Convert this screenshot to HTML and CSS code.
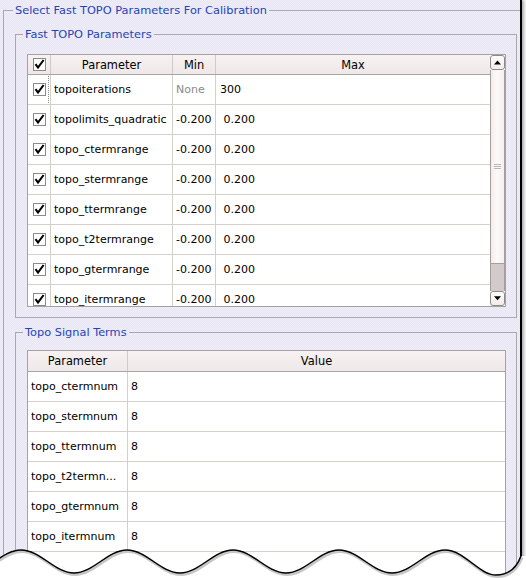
FILE: index.html
```html
<!DOCTYPE html>
<html>
<head>
<meta charset="utf-8">
<link rel="stylesheet" href="styles.css">
</head>
<body>
<div class="screen">
  <div class="window">
    <div class="group g1">
      <div class="ghead lead10"><span class="gtitle">Select Fast TOPO Parameters For Calibration</span></div>
      <div class="gbody b1">
        <div class="group g2">
          <div class="ghead lead8"><span class="gtitle">Fast TOPO Parameters</span></div>
          <div class="gbody b2">
            <div class="tbl t1">
              <div class="grid">
                <div class="row head">
                  <div class="c w-chk"><svg class="cb" width="13" height="13" viewBox="0 0 13 13"><rect x=".5" y=".5" width="12" height="12"/><path d="M2.5 6.2L5 9.6L10.6 2"/></svg></div>
                  <div class="c w-par">Parameter</div>
                  <div class="c w-min">Min</div>
                  <div class="c w-max">Max</div>
                </div>
                <div class="row">
                  <div class="c w-chk focus"><svg class="cb" width="13" height="13" viewBox="0 0 13 13"><rect x=".5" y=".5" width="12" height="12"/><path d="M2.5 6.2L5 9.6L10.6 2"/></svg></div>
                  <div class="c w-par">topoiterations</div>
                  <div class="c w-min muted">None</div>
                  <div class="c w-max">300</div>
                </div>
                <div class="row">
                  <div class="c w-chk"><svg class="cb" width="13" height="13" viewBox="0 0 13 13"><rect x=".5" y=".5" width="12" height="12"/><path d="M2.5 6.2L5 9.6L10.6 2"/></svg></div>
                  <div class="c w-par">topolimits_quadratic</div>
                  <div class="c w-min">-0.200</div>
                  <div class="c w-max"> 0.200</div>
                </div>
                <div class="row">
                  <div class="c w-chk"><svg class="cb" width="13" height="13" viewBox="0 0 13 13"><rect x=".5" y=".5" width="12" height="12"/><path d="M2.5 6.2L5 9.6L10.6 2"/></svg></div>
                  <div class="c w-par">topo_ctermrange</div>
                  <div class="c w-min">-0.200</div>
                  <div class="c w-max"> 0.200</div>
                </div>
                <div class="row">
                  <div class="c w-chk"><svg class="cb" width="13" height="13" viewBox="0 0 13 13"><rect x=".5" y=".5" width="12" height="12"/><path d="M2.5 6.2L5 9.6L10.6 2"/></svg></div>
                  <div class="c w-par">topo_stermrange</div>
                  <div class="c w-min">-0.200</div>
                  <div class="c w-max"> 0.200</div>
                </div>
                <div class="row">
                  <div class="c w-chk"><svg class="cb" width="13" height="13" viewBox="0 0 13 13"><rect x=".5" y=".5" width="12" height="12"/><path d="M2.5 6.2L5 9.6L10.6 2"/></svg></div>
                  <div class="c w-par">topo_ttermrange</div>
                  <div class="c w-min">-0.200</div>
                  <div class="c w-max"> 0.200</div>
                </div>
                <div class="row">
                  <div class="c w-chk"><svg class="cb" width="13" height="13" viewBox="0 0 13 13"><rect x=".5" y=".5" width="12" height="12"/><path d="M2.5 6.2L5 9.6L10.6 2"/></svg></div>
                  <div class="c w-par">topo_t2termrange</div>
                  <div class="c w-min">-0.200</div>
                  <div class="c w-max"> 0.200</div>
                </div>
                <div class="row">
                  <div class="c w-chk"><svg class="cb" width="13" height="13" viewBox="0 0 13 13"><rect x=".5" y=".5" width="12" height="12"/><path d="M2.5 6.2L5 9.6L10.6 2"/></svg></div>
                  <div class="c w-par">topo_gtermrange</div>
                  <div class="c w-min">-0.200</div>
                  <div class="c w-max"> 0.200</div>
                </div>
                <div class="row">
                  <div class="c w-chk"><svg class="cb" width="13" height="13" viewBox="0 0 13 13"><rect x=".5" y=".5" width="12" height="12"/><path d="M2.5 6.2L5 9.6L10.6 2"/></svg></div>
                  <div class="c w-par">topo_itermrange</div>
                  <div class="c w-min">-0.200</div>
                  <div class="c w-max"> 0.200</div>
                </div>
              </div>
              <div class="scrollbar">
                <div class="sb-btn"><svg width="13" height="13" viewBox="0 0 13 13"><path d="M3 8.5h7L6.5 4.6z"/></svg></div>
                <div class="sb-mid">
                  <div class="sb-thumb"><svg width="8" height="6" viewBox="0 0 8 6"><path d="M0 .5h7M0 2.5h7M0 4.5h7"/></svg></div>
                  <div class="sb-trough"></div>
                </div>
                <div class="sb-btn"><svg width="13" height="13" viewBox="0 0 13 13"><path d="M3 4.3h7L6.5 8.2z"/></svg></div>
              </div>
            </div>
          </div>
        </div>
        <div class="group g3">
          <div class="ghead lead8"><span class="gtitle">Topo Signal Terms</span></div>
          <div class="gbody b3">
            <div class="tbl t2">
              <div class="row head h2">
                <div class="c w-p2">Parameter</div>
                <div class="c w-val">Value</div>
              </div>
              <div class="row"><div class="c w-p2">topo_ctermnum</div><div class="c w-val">8</div></div>
              <div class="row"><div class="c w-p2">topo_stermnum</div><div class="c w-val">8</div></div>
              <div class="row"><div class="c w-p2">topo_ttermnum</div><div class="c w-val">8</div></div>
              <div class="row"><div class="c w-p2">topo_t2termn...</div><div class="c w-val">8</div></div>
              <div class="row"><div class="c w-p2">topo_gtermnum</div><div class="c w-val">8</div></div>
              <div class="row"><div class="c w-p2">topo_itermnum</div><div class="c w-val">8</div></div>
              <div class="row"><div class="c w-p2"></div><div class="c w-val"></div></div>
            </div>
          </div>
        </div>
      </div>
    </div>
  </div>
  <svg class="tear" width="526" height="40" viewBox="0 538 526 40">
    <path class="tear-fill" d="M-32 573C-12.7 573 1.7 550 21 550S54.7 573 74 573S107.7 550 127 550S160.7 573 180 573S213.7 550 233 550S266.7 573 286 573S319.7 550 339 550S372.7 573 392 573S425.7 550 445 550S478.7 575 496 575C509 575 517 567 521 556L526 556L526 580L-40 580Z"/>
    <path class="tear-shadow" d="M-32 573C-12.7 573 1.7 550 21 550S54.7 573 74 573S107.7 550 127 550S160.7 573 180 573S213.7 550 233 550S266.7 573 286 573S319.7 550 339 550S372.7 573 392 573S425.7 550 445 550S478.7 575 496 575C509 575 517 567 521 556"/>
    <path class="tear-line" d="M-32 573C-12.7 573 1.7 550 21 550S54.7 573 74 573S107.7 550 127 550S160.7 573 180 573S213.7 550 233 550S266.7 573 286 573S319.7 550 339 550S372.7 573 392 573S425.7 550 445 550S478.7 575 496 575C509 575 517 567 521 556"/>
  </svg>
</div>
</body>
</html>
```

FILE: styles.css
```css
:root {
  --gl: #a9a8b2;
  --grid: #d5d0cc;
  --tb: #a6a2a0;
}
html, body {
  margin: 0;
  padding: 0;
}
body {
  width: 526px;
  height: 578px;
  overflow: hidden;
  background: #fff;
  font-family: "DejaVu Sans", "Liberation Sans", sans-serif;
  font-size: 11px;
  color: #000;
}
.screen {
  position: relative;
  width: 526px;
  height: 578px;
  overflow: hidden;
}
.window {
  width: 520px;
  height: 578px;
  border-right: 2px solid #000;
  overflow: hidden;
  background: repeating-conic-gradient(#e8e6f2 0 25%, #efeef8 0 50%) 0 0 / 2px 2px;
  box-shadow: 2px 0 3px rgba(0, 0, 0, 0.35);
}

/* group boxes */
.group {
  display: flex;
  flex-direction: column;
}
.ghead {
  display: flex;
  height: 13px;
  line-height: 13px;
}
.ghead::before,
.ghead::after {
  content: "";
  box-sizing: border-box;
  height: 7px;
  align-self: flex-end;
  border-top: 1px solid var(--gl);
}
.ghead::before {
  border-left: 1px solid var(--gl);
}
.ghead::after {
  flex: 1;
  border-right: 1px solid var(--gl);
}
.lead10::before { width: 10px; }
.lead8::before { width: 8px; }
.gtitle {
  padding: 0 2px;
  color: #1e44b8;
  font-size: 11.35px;
  white-space: nowrap;
}
.gbody {
  border: 1px solid var(--gl);
  border-top: none;
}
.g1 {
  margin: 4px -10px 0 3px;
}
.b1 {
  padding: 11px 0 0 11px;
  height: 600px;
}
.g2, .g3 {
  width: 502px;
}
.b2 {
  padding: 13px 10px 10px 11px;
}
.g3 {
  margin-top: 8px;
}
.b3 {
  padding: 11px 10px 0 11px;
}

/* tables */
.tbl {
  border: 1px solid var(--tb);
  background: #fff;
  display: flex;
}
.t1 {
  box-sizing: border-box;
  height: 253px;
}
.grid {
  width: 462px;
  overflow: hidden;
  display: flex;
  flex-direction: column;
}
.row {
  display: flex;
  flex: none;
  box-sizing: border-box;
  height: 30px;
  border-bottom: 1px solid var(--grid);
}
.row.head {
  height: 20px;
  border-bottom: 1px solid #aaa4a4;
  background: linear-gradient(#f7f1f1, #efe8e8);
}
.row.h2 {
  height: 21px;
}
.c {
  box-sizing: border-box;
  display: flex;
  align-items: center;
  padding-left: 3px;
  border-right: 1px solid var(--grid);
  white-space: pre;
  overflow: hidden;
}
.head .c {
  justify-content: center;
  padding-left: 0;
  font-size: 11.4px;
  border-right-color: #d2caca;
}
.w-chk {
  width: 23px;
  justify-content: center;
  padding-left: 0;
}
.w-par { width: 122px; }
.w-min { width: 43px; }
.w-max {
  width: 274px;
  padding-left: 4px;
  border-right: none;
}
.head .w-max { border-right: none; }
.muted { color: #8a8a8a; }
.focus {
  background: repeating-linear-gradient(to bottom, #8a8a8a 0 1px, transparent 1px 2px) no-repeat right 1px top 1px / 1px calc(100% - 2px);
}
.t2 {
  flex-direction: column;
}
.w-p2 { width: 100px; }
.w-val {
  flex: 1;
  border-right: none;
}
.head .w-val { border-right: none; }

/* checkbox */
.cb rect {
  fill: #fff;
  stroke: #8e8a8a;
}
.cb path {
  fill: none;
  stroke: #000;
  stroke-width: 2.1;
}

/* scrollbar */
.scrollbar {
  width: 15px;
  display: flex;
  flex-direction: column;
  background: #fff;
}
.sb-btn {
  box-sizing: border-box;
  height: 15px;
  flex: none;
  border: 1px solid #8f8a8a;
  border-radius: 3px;
  background: linear-gradient(#fffcfc, #f2ecec);
  display: flex;
}
.sb-btn path { fill: #000; }
.sb-mid {
  flex: 1;
  display: flex;
  flex-direction: column;
  border-left: 1px solid #a39d9d;
  border-right: 1px solid #a39d9d;
}
.sb-thumb {
  box-sizing: border-box;
  height: 194px;
  flex: none;
  border-bottom: 1px solid #a39d9d;
  background: linear-gradient(to right, #f3ebeb, #fdf9f9 45%, #f6f0f0);
  display: flex;
  align-items: center;
  justify-content: center;
}
.sb-thumb path {
  stroke: #bcb4b4;
  stroke-width: 1;
}
.sb-trough {
  flex: 1;
  background: #d3cbcb;
}

/* torn edge */
.tear {
  position: absolute;
  left: 0;
  top: 538px;
}
.tear-fill { fill: #fff; }
.tear-shadow {
  fill: none;
  stroke: rgba(0, 0, 0, 0.22);
  stroke-width: 3;
  transform: translate(1px, 1.5px);
}
.tear-line {
  fill: none;
  stroke: #000;
  stroke-width: 1.5;
}
```
